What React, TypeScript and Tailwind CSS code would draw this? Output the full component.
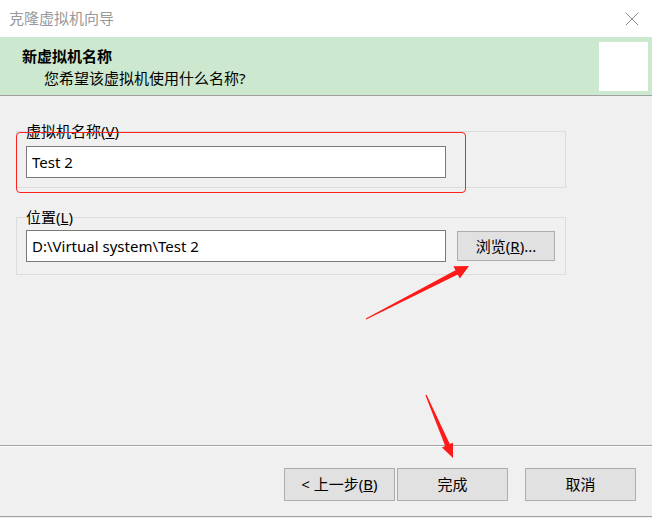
import { X } from 'lucide-react'

const FONT = "font-['Noto_Sans','Noto_Sans_CJK_SC',sans-serif]"

function WinButton({ children, className = '' }: { children: React.ReactNode; className?: string }) {
  return (
    <button
      className={`h-[33px] w-[111px] bg-[#e1e1e1] border border-[#adadad] text-[15px] text-black flex items-center justify-center ${className}`}
    >
      {children}
    </button>
  )
}

function Arrows() {
  // red annotation arrows drawn over the dialog
  return (
    <svg className="absolute inset-0 pointer-events-none" width="652" height="518" viewBox="0 0 652 518">
      <polygon
        fill="#ff1a1a"
        points="365.8,318.6 455.5,270.2 453.4,266.2 469,266 459.8,278.6 457.7,274.6 366.2,319.4"
      />
      <polygon
        fill="#ff1a1a"
        points="426.6,394.7 449.8,444.1 453,442.7 453,458 442,447.5 445.2,446.1 425.4,395.3"
      />
    </svg>
  )
}

export default function App() {
  return (
    <div className={`relative w-[652px] h-[518px] overflow-hidden bg-[#f0f0f0] flex flex-col ${FONT}`}>
      {/* Title bar */}
      <div className="h-[37px] bg-white flex items-center justify-between pl-[9px] pr-[8px] flex-shrink-0">
        <span className="text-[15px] text-[#999999]">克隆虚拟机向导</span>
        <X size={24} strokeWidth={0.8} className="text-[#707070]" />
      </div>

      {/* Header */}
      <div className="h-[59px] bg-[#cce8cf] border-b border-[#a0a0a0] flex justify-between flex-shrink-0">
        <div className="pl-[22px] pt-[8px] text-[15px] leading-[22px] text-black">
          <div className="font-bold">新虚拟机名称</div>
          <div className="pl-[22px]">您希望该虚拟机使用什么名称?</div>
        </div>
        <div className="w-[49px] h-[49px] bg-white mt-[5px] mr-[4px]" />
      </div>

      {/* Body */}
      <div className="flex-1 px-[16px] pt-[25px] flex flex-col gap-[19px]">
        <fieldset className="w-[550px] border border-[#dcdcdc] px-[9px] pb-[9px]">
          <legend className="text-[15px] leading-[20px] text-black">
            虚拟机名称(<span className="underline">V</span>)
          </legend>
          <div className="mt-[5px] w-[420px] h-[32px] bg-white border border-[#7a7a7a] flex items-center px-[5px] text-[15px] text-black">
            Test 2
          </div>
        </fieldset>

        <fieldset className="w-[550px] border border-[#dcdcdc] px-[9px] pb-[12px]">
          <legend className="text-[15px] leading-[20px] text-black">
            位置(<span className="underline">L</span>)
          </legend>
          <div className="mt-[3px] flex items-center gap-[11px]">
            <div className="w-[420px] h-[32px] bg-white border border-[#7a7a7a] flex items-center px-[5px] text-[15px] text-black">
              D:\Virtual system\Test 2
            </div>
            <button className="w-[98px] h-[30px] bg-[#e1e1e1] border border-[#adadad] text-[15px] text-black flex items-center justify-center">
              浏览(<span className="underline">R</span>)...
            </button>
          </div>
        </fieldset>
      </div>

      {/* Footer */}
      <div className="h-[73px] border-t border-[#a0a0a0] flex-shrink-0">
        <div className="h-full border-t border-white">
          <div className="h-[70px] border-b border-[#a0a0a0] flex justify-end items-start pt-[21px] pr-[16px]">
            <WinButton>
              &lt; 上一步(<span className="underline">B</span>)
            </WinButton>
            <WinButton className="ml-[2px]">完成</WinButton>
            <WinButton className="ml-[17px]">取消</WinButton>
          </div>
        </div>
      </div>

      {/* Annotations */}
      <div className="absolute left-[16px] top-[132px] w-[450px] h-[61px] border-[1.5px] border-[#ff2020] rounded-[4px] pointer-events-none" />
      <Arrows />
    </div>
  )
}
